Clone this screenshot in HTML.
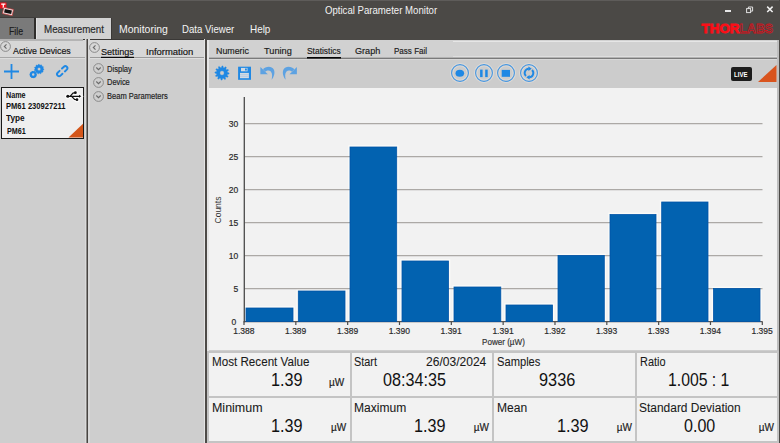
<!DOCTYPE html>
<html><head><meta charset="utf-8"><style>
html,body{margin:0;padding:0;}
body{width:780px;height:443px;overflow:hidden;position:relative;background:#cecece;font-family:"Liberation Sans", sans-serif;}
.t{-webkit-text-stroke:0.18px currentColor;}.tm{-webkit-text-stroke:0.08px currentColor;}.tl{}
</style></head><body>
<div style="position:absolute;left:0px;top:0px;width:780px;height:40px;background:#4b4946;"></div>
<div style="position:absolute;left:0px;top:0px;width:780px;height:1px;background:#5e5c5a;"></div>
<svg style="position:absolute;left:0;top:0" width="16" height="17" viewBox="0 0 16 17">
<rect x="0" y="2.5" width="6.5" height="6" fill="#e8121c"/>
<path d="M1.2 3.6h4.2v1.2h-1.5v3.2h-1.2v-3.2h-1.5z" fill="#fff"/>
<g transform="rotate(12 8 11.5)"><rect x="3" y="8.3" width="10" height="6.4" fill="#f4dede" stroke="#c03030" stroke-width="0.6"/><rect x="4.4" y="9.6" width="7.2" height="3.8" fill="#111"/></g>
</svg>
<div style="position:absolute;left:725px;top:10px;width:6px;height:2px;background:#e6e6e6;"></div>
<svg style="position:absolute;left:745px;top:5px" width="10" height="9" viewBox="0 0 10 9">
<rect x="1.6" y="3.6" width="4" height="4" fill="none" stroke="#e0e0e0" stroke-width="1"/>
<path d="M3.4 3.6v-1.6h4.2v4.1h-2" fill="none" stroke="#e0e0e0" stroke-width="1"/></svg>
<svg style="position:absolute;left:765px;top:5px" width="10" height="9" viewBox="0 0 10 9">
<path d="M2.2 1.6l5.4 5.4M7.6 1.6l-5.4 5.4" stroke="#f0f0f0" stroke-width="1.5"/></svg>
<svg style="position:absolute;left:700px;top:22px" width="76" height="13" viewBox="0 0 76 13">
<text x="1.5" y="11.3" font-family="Liberation Sans" font-weight="bold" font-size="13.5" fill="#fa0f18" stroke="#fa0f18" stroke-width="0.9" textLength="38" lengthAdjust="spacingAndGlyphs">THOR</text>
<text x="39.6" y="11.3" font-family="Liberation Sans" font-weight="bold" font-size="13.5" fill="none" stroke="#d0121c" stroke-width="0.8" textLength="33.4" lengthAdjust="spacingAndGlyphs">LABS</text>
</svg>
<div style="position:absolute;left:0px;top:17px;width:36px;height:1px;background:#3e3c3a;"></div>
<div style="position:absolute;left:0px;top:18px;width:35px;height:21px;background:#7a7a7a;"></div>
<div style="position:absolute;left:34px;top:18px;width:2px;height:21px;background:#2f2d2b;"></div>
<div style="position:absolute;left:36px;top:18px;width:75px;height:21px;background:#d2d2d2;"></div>
<div style="position:absolute;left:36px;top:18px;width:1px;height:21px;background:#e2e2e2;"></div>
<div style="position:absolute;left:111px;top:18px;width:1px;height:21px;background:#3a3836;"></div>
<div style="position:absolute;left:0px;top:40px;width:86px;height:403px;background:#cecece;"></div>
<div style="position:absolute;left:0px;top:40px;width:86px;height:17px;background:#d7d7d7;"></div>
<div style="position:absolute;left:0px;top:39px;width:83px;height:1.5px;background:#b4b4b4;"></div>
<div style="position:absolute;left:83px;top:39px;width:122px;height:1px;background:#3a3836;"></div>
<div style="position:absolute;left:0px;top:57px;width:86px;height:1px;background:#a6a6a6;"></div>
<div style="position:absolute;left:0px;top:58px;width:86px;height:1px;background:#dcdcdc;"></div>
<div style="position:absolute;left:85px;top:39px;width:1px;height:404px;background:#dadada;"></div>
<div style="position:absolute;left:86px;top:39px;width:1px;height:404px;background:#8c8a88;"></div>
<div style="position:absolute;left:87px;top:39px;width:1px;height:404px;background:#484542;"></div>
<div style="position:absolute;left:88px;top:39px;width:2px;height:404px;background:#d8d8d8;"></div>
<svg style="position:absolute;left:0px;top:41px" width="11" height="11" viewBox="0 0 11 11"><circle cx="5.5" cy="5.5" r="4.9" fill="none" stroke="#8a8a8a" stroke-width="1"/><path d="M6.5 3.3L4.3 5.5L6.5 7.7" fill="none" stroke="#6a6a6a" stroke-width="1.1"/></svg>
<svg style="position:absolute;left:3px;top:63px" width="17" height="17" viewBox="0 0 17 17">
<path d="M8.5 1v15M1 8.5h15" stroke="#1f88e4" stroke-width="1.8"/></svg>
<svg style="position:absolute;left:28px;top:62px" width="18" height="18" viewBox="0 0 18 18">
<path fill-rule="evenodd" fill="#1f88e4" stroke="#1f88e4" stroke-width="0.4" stroke-linejoin="round" d="M15.90 7.10L15.85 7.78L15.03 8.26L14.83 8.80L15.14 9.70L14.73 10.24L13.78 10.20L13.32 10.55L13.09 11.47L12.45 11.71L11.68 11.16L11.10 11.20L10.42 11.85L9.75 11.71L9.40 10.83L8.88 10.55L7.96 10.73L7.47 10.24L7.65 9.32L7.37 8.80L6.49 8.45L6.35 7.78L7.00 7.10L7.04 6.52L6.49 5.75L6.73 5.11L7.65 4.88L8.00 4.42L7.96 3.47L8.50 3.06L9.40 3.37L9.94 3.17L10.42 2.35L11.10 2.30L11.68 3.04L12.26 3.17L13.09 2.73L13.70 3.06L13.78 4.00L14.20 4.42L15.14 4.50L15.47 5.11L15.03 5.94L15.16 6.52ZM12.70 7.10A1.6 1.6 0 1 0 9.50 7.10A1.6 1.6 0 1 0 12.70 7.10Z"/>
<path fill-rule="evenodd" fill="#1f88e4" d="M8.90 12.60L8.85 13.18L8.53 13.68L8.32 14.19L8.19 14.77L7.82 15.22L7.26 15.43L6.79 15.72L6.34 16.12L5.78 16.25L5.20 16.10L4.65 16.06L4.06 16.12L3.52 15.90L3.14 15.43L2.73 15.07L2.21 14.77L1.90 14.28L1.87 13.68L1.74 13.15L1.50 12.60L1.55 12.02L1.87 11.52L2.08 11.01L2.21 10.43L2.58 9.98L3.14 9.77L3.61 9.48L4.06 9.08L4.62 8.95L5.20 9.10L5.75 9.14L6.34 9.08L6.88 9.30L7.26 9.77L7.67 10.13L8.19 10.43L8.50 10.92L8.53 11.52L8.66 12.05ZM6.45 12.60A1.25 1.25 0 1 0 3.95 12.60A1.25 1.25 0 1 0 6.45 12.60Z"/>
</svg>
<svg style="position:absolute;left:54px;top:63px" width="17" height="17" viewBox="0 0 17 17">
<g transform="translate(8.3 8.2) scale(0.8) translate(-8 -7.5)">
<path d="M7.6 4.2l2.4-2.3c1-1 2.6-1 3.6 0s1 2.6 0 3.6l-2.4 2.3" fill="none" stroke="#1f88e4" stroke-width="2.4" stroke-linecap="round"/>
<path d="M8.2 10.7l-2.4 2.3c-1 1-2.6 1-3.6 0s-1-2.6 0-3.6l2.4-2.3" fill="none" stroke="#1f88e4" stroke-width="2.4" stroke-linecap="round"/></g>
</svg>
<div style="position:absolute;left:1px;top:87px;width:83px;height:52px;background:#efefef;box-sizing:border-box;border:1.6px solid #1a1a1a;"></div>
<svg style="position:absolute;left:62px;top:88px" width="22" height="16" viewBox="0 0 22 16">
<g fill="#fafafa" stroke="#fafafa" stroke-width="2.6"><circle cx="5.8" cy="8.3" r="1.5"/><path d="M5.8 8.3H18M8 8.3L11 5.1L13.4 4.7M9.6 8.3L12.6 11.4L15 11.7" fill="none" stroke-width="3.2"/><path d="M17 6.8L19.3 8.3L17 9.8Z"/><circle cx="13.4" cy="4.7" r="1.35"/><circle cx="15" cy="11.7" r="1.35"/></g>
<g fill="#111" stroke="#111"><circle stroke="none" cx="5.8" cy="8.3" r="1.5"/><path d="M5.8 8.3H18M8 8.3L11 5.1L13.4 4.7M9.6 8.3L12.6 11.4L15 11.7" fill="none" stroke-width="1.2"/><path stroke="none" d="M17 6.8L19.3 8.3L17 9.8Z"/><circle stroke="none" cx="13.4" cy="4.7" r="1.35"/><circle stroke="none" cx="15" cy="11.7" r="1.35"/></g>
</svg>
<svg style="position:absolute;left:68px;top:123px" width="16" height="15" viewBox="0 0 16 15">
<path d="M0.5 14.5L15 0.8V14.5Z" fill="#d4561a"/></svg>
<div style="position:absolute;left:88px;top:40px;width:117px;height:403px;background:#cecece;"></div>
<div style="position:absolute;left:88px;top:40px;width:117px;height:17px;background:#d7d7d7;"></div>
<div style="position:absolute;left:88px;top:57px;width:117px;height:1px;background:#9a9a9a;"></div>
<div style="position:absolute;left:88px;top:58px;width:117px;height:1px;background:#dedede;"></div>
<div style="position:absolute;left:85px;top:39px;width:1px;height:404px;background:#dadada;"></div>
<div style="position:absolute;left:86px;top:39px;width:1px;height:404px;background:#8c8a88;"></div>
<div style="position:absolute;left:87px;top:39px;width:1px;height:404px;background:#484542;"></div>
<div style="position:absolute;left:88px;top:39px;width:2px;height:404px;background:#d8d8d8;"></div>
<svg style="position:absolute;left:89px;top:42px" width="11" height="11" viewBox="0 0 11 11"><circle cx="5.5" cy="5.5" r="4.9" fill="none" stroke="#8a8a8a" stroke-width="1"/><path d="M6.5 3.3L4.3 5.5L6.5 7.7" fill="none" stroke="#6a6a6a" stroke-width="1.1"/></svg>
<div style="position:absolute;left:101px;top:57px;width:33px;height:1px;background:#0c0c0c;"></div>
<div style="position:absolute;left:101px;top:56px;width:33px;height:1px;background:#a8a8a8;"></div>
<svg style="position:absolute;left:93px;top:63px" width="11" height="11" viewBox="0 0 11 11"><circle cx="5.5" cy="5.5" r="4.9" fill="none" stroke="#8a8a8a" stroke-width="1"/><path d="M3.3 4.5L5.5 6.7L7.7 4.5" fill="none" stroke="#6a6a6a" stroke-width="1.1"/></svg>
<svg style="position:absolute;left:93px;top:77px" width="11" height="11" viewBox="0 0 11 11"><circle cx="5.5" cy="5.5" r="4.9" fill="none" stroke="#8a8a8a" stroke-width="1"/><path d="M3.3 4.5L5.5 6.7L7.7 4.5" fill="none" stroke="#6a6a6a" stroke-width="1.1"/></svg>
<svg style="position:absolute;left:93px;top:90.5px" width="11" height="11" viewBox="0 0 11 11"><circle cx="5.5" cy="5.5" r="4.9" fill="none" stroke="#8a8a8a" stroke-width="1"/><path d="M3.3 4.5L5.5 6.7L7.7 4.5" fill="none" stroke="#6a6a6a" stroke-width="1.1"/></svg>
<div style="position:absolute;left:204px;top:39px;width:1px;height:404px;background:#e4e4e4;"></div>
<div style="position:absolute;left:205px;top:39px;width:2px;height:404px;background:#4e4b48;"></div>
<div style="position:absolute;left:207px;top:40px;width:573px;height:17px;background:#d1d1d1;"></div>
<div style="position:absolute;left:453px;top:41px;width:327px;height:1px;background:#e6e6e6;"></div>
<div style="position:absolute;left:453px;top:56px;width:327px;height:1px;background:#dedede;"></div>
<div style="position:absolute;left:207px;top:57px;width:573px;height:1px;background:#b2b2b2;"></div>
<div style="position:absolute;left:207px;top:58px;width:573px;height:1px;background:#7a7a7a;"></div>
<div style="position:absolute;left:207px;top:59px;width:573px;height:1px;background:#d8d8d8;"></div>
<div style="position:absolute;left:207px;top:60px;width:573px;height:28px;background:#cccccc;"></div>
<div style="position:absolute;left:207px;top:40px;width:2px;height:403px;background:#e6e6e6;"></div>
<div style="position:absolute;left:307px;top:57px;width:34px;height:1px;background:#050505;"></div>
<div style="position:absolute;left:307px;top:58px;width:34px;height:1px;background:#3c3c3c;"></div>
<svg style="position:absolute;left:213px;top:64px" width="18" height="18" viewBox="0 0 18 18">
<path fill-rule="evenodd" fill="#1f88e4" stroke="#1f88e4" stroke-width="0.4" stroke-linejoin="round" d="M16.10 9.00L16.04 9.93L14.22 10.40L13.99 11.07L15.15 12.55L14.63 13.32L12.82 12.82L12.29 13.28L12.55 15.15L11.72 15.56L10.40 14.22L9.70 14.35L9.00 16.10L8.07 16.04L7.60 14.22L6.93 13.99L5.45 15.15L4.68 14.63L5.18 12.82L4.72 12.29L2.85 12.55L2.44 11.72L3.78 10.40L3.65 9.70L1.90 9.00L1.96 8.07L3.78 7.60L4.01 6.93L2.85 5.45L3.37 4.68L5.18 5.18L5.71 4.72L5.45 2.85L6.28 2.44L7.60 3.78L8.30 3.65L9.00 1.90L9.93 1.96L10.40 3.78L11.07 4.01L12.55 2.85L13.32 3.37L12.82 5.18L13.28 5.71L15.15 5.45L15.56 6.28L14.22 7.60L14.35 8.30ZM11.20 9.00A2.2 2.2 0 1 0 6.80 9.00A2.2 2.2 0 1 0 11.20 9.00Z"/></svg>
<svg style="position:absolute;left:237px;top:66px" width="15" height="15" viewBox="0 0 15 15">
<rect x="1.1" y="0.7" width="12.9" height="13.1" fill="#1f88e4"/>
<rect x="3" y="6.9" width="8.9" height="5.3" fill="#d4dbe2"/>
<path d="M3 8.6h8.9M3 10.4h8.9" stroke="#a8c6e6" stroke-width="0.7"/>
<rect x="4" y="1.9" width="6.5" height="3.4" fill="#d4dbe2"/>
<rect x="8" y="2.5" width="1.8" height="2" fill="#1f88e4"/>
</svg>
<svg style="position:absolute;left:259px;top:65px" width="17" height="16" viewBox="0 0 17 16"><path d="M1.4 2L1.4 9.2L8.8 9.2Z" fill="#5da2e2"/><path d="M4 4.3C6 1.5 12.5 0 14.8 4.5C16.3 7.8 15 11.8 12.6 14.8C13.2 11.5 13.6 8.5 11.8 6.5C10.3 4.8 7.8 5.3 6.3 6.8Z" fill="#5da2e2"/></svg>
<svg style="position:absolute;left:282px;top:65px" width="17" height="16" viewBox="0 0 17 16"><g transform="translate(16.3 0) scale(-1 1)"><path d="M1.4 2L1.4 9.2L8.8 9.2Z" fill="#5da2e2"/><path d="M4 4.3C6 1.5 12.5 0 14.8 4.5C16.3 7.8 15 11.8 12.6 14.8C13.2 11.5 13.6 8.5 11.8 6.5C10.3 4.8 7.8 5.3 6.3 6.8Z" fill="#5da2e2"/></g></svg>
<svg style="position:absolute;left:450px;top:63px" width="20" height="20" viewBox="0 0 20 20">
<circle cx="10" cy="10" r="8.4" fill="none" stroke="#dedad6" stroke-width="3.2"/><circle cx="10" cy="10" r="8.4" fill="none" stroke="#4696e0" stroke-width="1.15"/><ellipse cx="9.8" cy="10.3" rx="4.3" ry="3.5" fill="#1f88e4"/></svg>
<svg style="position:absolute;left:473.5px;top:63px" width="20" height="20" viewBox="0 0 20 20">
<circle cx="10" cy="10" r="8.4" fill="none" stroke="#dedad6" stroke-width="3.2"/><circle cx="10" cy="10" r="8.4" fill="none" stroke="#4696e0" stroke-width="1.15"/><rect x="6.1" y="6.6" width="2.5" height="7.5" fill="#1f88e4"/><rect x="11.2" y="6.6" width="2.5" height="7.5" fill="#1f88e4"/></svg>
<svg style="position:absolute;left:496.3px;top:63px" width="20" height="20" viewBox="0 0 20 20">
<circle cx="10" cy="10" r="8.4" fill="none" stroke="#dedad6" stroke-width="3.2"/><circle cx="10" cy="10" r="8.4" fill="none" stroke="#4696e0" stroke-width="1.15"/><rect x="5.7" y="6.9" width="8.3" height="6.9" fill="#1f88e4"/></svg>
<svg style="position:absolute;left:519px;top:63px" width="20" height="20" viewBox="0 0 20 20">
<circle cx="10" cy="10" r="8.4" fill="none" stroke="#dedad6" stroke-width="3.2"/><circle cx="10" cy="10" r="8.4" fill="none" stroke="#4696e0" stroke-width="1.15"/><path d="M6.96 13.04A4.3 4.3 0 0 1 9.8 5.7M13.04 6.96A4.3 4.3 0 0 1 10.2 14.3" fill="none" stroke="#1f88e4" stroke-width="1.9"/><path d="M9.4 3.5L12.7 5.7L9.4 7.9ZM10.6 12.1L7.3 14.3L10.6 16.5Z" fill="#1f88e4"/></svg>
<div style="position:absolute;left:731px;top:67px;width:20.5px;height:14px;background:#1c1c1c;border-radius:2px;"></div>
<svg style="position:absolute;left:757px;top:64px" width="21" height="19" viewBox="0 0 21 19">
<path d="M1 18L19.5 1V18Z" fill="#d9541e"/></svg>
<div style="position:absolute;left:777px;top:40px;width:2px;height:403px;background:#bebebe;"></div>
<div style="position:absolute;left:209px;top:88px;width:568px;height:262px;background:#f2f2f2;"></div>
<div style="position:absolute;left:207px;top:88px;width:2px;height:355px;background:#e6e6e6;"></div>
<svg style="position:absolute;left:207px;top:88px" width="571" height="262" viewBox="207 88 571 262"><line x1="244.00" y1="321.6" x2="244.00" y2="325" stroke="#4a4a4a" stroke-width="1.2"/><line x1="295.83" y1="321.6" x2="295.83" y2="325" stroke="#4a4a4a" stroke-width="1.2"/><line x1="347.66" y1="321.6" x2="347.66" y2="325" stroke="#4a4a4a" stroke-width="1.2"/><line x1="399.49" y1="321.6" x2="399.49" y2="325" stroke="#4a4a4a" stroke-width="1.2"/><line x1="451.32" y1="321.6" x2="451.32" y2="325" stroke="#4a4a4a" stroke-width="1.2"/><line x1="503.15" y1="321.6" x2="503.15" y2="325" stroke="#4a4a4a" stroke-width="1.2"/><line x1="554.98" y1="321.6" x2="554.98" y2="325" stroke="#4a4a4a" stroke-width="1.2"/><line x1="606.81" y1="321.6" x2="606.81" y2="325" stroke="#4a4a4a" stroke-width="1.2"/><line x1="658.64" y1="321.6" x2="658.64" y2="325" stroke="#4a4a4a" stroke-width="1.2"/><line x1="710.47" y1="321.6" x2="710.47" y2="325" stroke="#4a4a4a" stroke-width="1.2"/><line x1="762.30" y1="321.6" x2="762.30" y2="325" stroke="#4a4a4a" stroke-width="1.2"/><rect x="244.20" y="306.20" width="50.60" height="15.40" fill="#fbfbf8"/><rect x="296.50" y="289.20" width="50.30" height="32.40" fill="#fbfbf8"/><rect x="348.20" y="145.20" width="50.30" height="176.40" fill="#fbfbf8"/><rect x="400.20" y="259.20" width="50.10" height="62.40" fill="#fbfbf8"/><rect x="452.20" y="285.20" width="50.40" height="36.40" fill="#fbfbf8"/><rect x="504.20" y="303.20" width="50.10" height="18.40" fill="#fbfbf8"/><rect x="556.20" y="253.70" width="49.90" height="67.90" fill="#fbfbf8"/><rect x="608.20" y="212.70" width="49.60" height="108.90" fill="#fbfbf8"/><rect x="659.90" y="200.20" width="49.90" height="121.40" fill="#fbfbf8"/><rect x="711.70" y="286.70" width="50.10" height="34.90" fill="#fbfbf8"/><line x1="244" y1="123.60" x2="762.5" y2="123.60" stroke="#aca9a6" stroke-width="1.3"/><line x1="244" y1="156.60" x2="762.5" y2="156.60" stroke="#aca9a6" stroke-width="1.3"/><line x1="244" y1="189.60" x2="762.5" y2="189.60" stroke="#aca9a6" stroke-width="1.3"/><line x1="244" y1="222.60" x2="762.5" y2="222.60" stroke="#aca9a6" stroke-width="1.3"/><line x1="244" y1="255.60" x2="762.5" y2="255.60" stroke="#aca9a6" stroke-width="1.3"/><line x1="244" y1="288.60" x2="762.5" y2="288.60" stroke="#aca9a6" stroke-width="1.3"/><line x1="243.7" y1="321.6" x2="762.5" y2="321.6" stroke="#5a5550" stroke-width="1.1"/><line x1="244.3" y1="97" x2="244.3" y2="322.2" stroke="#4a4a4a" stroke-width="1.3"/><rect x="246.00" y="308.00" width="47.00" height="13.60" fill="#0262b0" stroke="#0054a8" stroke-width="0.8"/><rect x="298.30" y="291.00" width="46.70" height="30.60" fill="#0262b0" stroke="#0054a8" stroke-width="0.8"/><rect x="350.00" y="147.00" width="46.70" height="174.60" fill="#0262b0" stroke="#0054a8" stroke-width="0.8"/><rect x="402.00" y="261.00" width="46.50" height="60.60" fill="#0262b0" stroke="#0054a8" stroke-width="0.8"/><rect x="454.00" y="287.00" width="46.80" height="34.60" fill="#0262b0" stroke="#0054a8" stroke-width="0.8"/><rect x="506.00" y="305.00" width="46.50" height="16.60" fill="#0262b0" stroke="#0054a8" stroke-width="0.8"/><rect x="558.00" y="255.50" width="46.30" height="66.10" fill="#0262b0" stroke="#0054a8" stroke-width="0.8"/><rect x="610.00" y="214.50" width="46.00" height="107.10" fill="#0262b0" stroke="#0054a8" stroke-width="0.8"/><rect x="661.70" y="202.00" width="46.30" height="119.60" fill="#0262b0" stroke="#0054a8" stroke-width="0.8"/><rect x="713.50" y="288.50" width="46.50" height="33.10" fill="#0262b0" stroke="#0054a8" stroke-width="0.8"/></svg>
<div style="position:absolute;left:190px;top:204px;width:56px;height:12px;font-size:8.5px;line-height:12px;color:#333;text-align:center;transform:rotate(-90deg);">Counts</div>
<div style="position:absolute;left:207px;top:350.5px;width:573px;height:93px;background:#c4c4c4;"></div>
<div style="position:absolute;left:209px;top:352.5px;width:140.5px;height:43.5px;background:#f2f2f2;"></div>
<div style="position:absolute;left:209px;top:398px;width:140.5px;height:43px;background:#f2f2f2;"></div>
<div style="position:absolute;left:351.5px;top:352.5px;width:140.5px;height:43.5px;background:#f2f2f2;"></div>
<div style="position:absolute;left:351.5px;top:398px;width:140.5px;height:43px;background:#f2f2f2;"></div>
<div style="position:absolute;left:494px;top:352.5px;width:141px;height:43.5px;background:#f2f2f2;"></div>
<div style="position:absolute;left:494px;top:398px;width:141px;height:43px;background:#f2f2f2;"></div>
<div style="position:absolute;left:637px;top:352.5px;width:140px;height:43.5px;background:#f2f2f2;"></div>
<div style="position:absolute;left:637px;top:398px;width:140px;height:43px;background:#f2f2f2;"></div>
<div style="position:absolute;left:777px;top:350.5px;width:2px;height:93px;background:#c4c4c4;"></div>
<div style="position:absolute;left:779px;top:0px;width:1px;height:443px;background:#4b4946;"></div>
<div class="tl" style="position:absolute;left:324.80px;top:4.65px;font-size:11px;line-height:1;font-weight:normal;color:#f2f2f2;white-space:pre;transform:scaleX(0.8732);transform-origin:0 0;">Optical Parameter Monitor</div>
<div class="t" style="position:absolute;left:9.00px;top:25.58px;font-size:10.5px;line-height:1;font-weight:normal;color:#1c1c1c;white-space:pre;transform:scaleX(0.8373);transform-origin:0 0;">File</div>
<div class="t" style="position:absolute;left:44.00px;top:24.08px;font-size:10.5px;line-height:1;font-weight:normal;color:#2a2a2a;white-space:pre;transform:scaleX(0.9335);transform-origin:0 0;">Measurement</div>
<div class="tl" style="position:absolute;left:118.50px;top:24.08px;font-size:10.5px;line-height:1;font-weight:normal;color:#f4f4f4;white-space:pre;transform:scaleX(0.9963);transform-origin:0 0;">Monitoring</div>
<div class="tl" style="position:absolute;left:182.30px;top:24.08px;font-size:10.5px;line-height:1;font-weight:normal;color:#f4f4f4;white-space:pre;transform:scaleX(0.9164);transform-origin:0 0;">Data Viewer</div>
<div class="tl" style="position:absolute;left:249.50px;top:24.08px;font-size:10.5px;line-height:1;font-weight:normal;color:#f4f4f4;white-space:pre;transform:scaleX(0.9423);transform-origin:0 0;">Help</div>
<div class="t" style="position:absolute;left:13.00px;top:45.92px;font-size:9.5px;line-height:1;font-weight:normal;color:#141414;white-space:pre;transform:scaleX(0.9273);transform-origin:0 0;">Active Devices</div>
<div class="tb" style="position:absolute;left:5.70px;top:90.79px;font-size:8.6px;line-height:1;font-weight:bold;color:#111;white-space:pre;transform:scaleX(0.8380);transform-origin:0 0;">Name</div>
<div class="tb" style="position:absolute;left:6.10px;top:102.29px;font-size:8.6px;line-height:1;font-weight:bold;color:#111;white-space:pre;transform:scaleX(0.8817);transform-origin:0 0;">PM61 230927211</div>
<div class="tb" style="position:absolute;left:5.70px;top:113.79px;font-size:8.6px;line-height:1;font-weight:bold;color:#111;white-space:pre;transform:scaleX(0.9572);transform-origin:0 0;">Type</div>
<div class="tb" style="position:absolute;left:6.80px;top:127.09px;font-size:8.6px;line-height:1;font-weight:bold;color:#111;white-space:pre;transform:scaleX(0.8337);transform-origin:0 0;">PM61</div>
<div class="t" style="position:absolute;left:101.40px;top:46.53px;font-size:9.5px;line-height:1;font-weight:normal;color:#141414;white-space:pre;transform:scaleX(0.9573);transform-origin:0 0;">Settings</div>
<div class="t" style="position:absolute;left:146.00px;top:46.53px;font-size:9.5px;line-height:1;font-weight:normal;color:#141414;white-space:pre;transform:scaleX(0.9949);transform-origin:0 0;">Information</div>
<div class="t" style="position:absolute;left:106.50px;top:64.78px;font-size:8.5px;line-height:1;font-weight:normal;color:#1e1e1e;white-space:pre;transform:scaleX(0.8910);transform-origin:0 0;">Display</div>
<div class="t" style="position:absolute;left:106.50px;top:78.28px;font-size:8.5px;line-height:1;font-weight:normal;color:#1e1e1e;white-space:pre;transform:scaleX(0.8761);transform-origin:0 0;">Device</div>
<div class="t" style="position:absolute;left:106.50px;top:91.78px;font-size:8.5px;line-height:1;font-weight:normal;color:#1e1e1e;white-space:pre;transform:scaleX(0.8865);transform-origin:0 0;">Beam Parameters</div>
<div class="t" style="position:absolute;left:215.80px;top:46.22px;font-size:9.5px;line-height:1;font-weight:normal;color:#1c1c1c;white-space:pre;transform:scaleX(0.9322);transform-origin:0 0;">Numeric</div>
<div class="t" style="position:absolute;left:263.50px;top:46.22px;font-size:9.5px;line-height:1;font-weight:normal;color:#1c1c1c;white-space:pre;transform:scaleX(0.9679);transform-origin:0 0;">Tuning</div>
<div class="t" style="position:absolute;left:306.50px;top:46.22px;font-size:9.5px;line-height:1;font-weight:normal;color:#1c1c1c;white-space:pre;transform:scaleX(0.8861);transform-origin:0 0;">Statistics</div>
<div class="t" style="position:absolute;left:355.00px;top:46.22px;font-size:9.5px;line-height:1;font-weight:normal;color:#1c1c1c;white-space:pre;transform:scaleX(0.9571);transform-origin:0 0;">Graph</div>
<div class="t" style="position:absolute;left:394.00px;top:46.22px;font-size:9.5px;line-height:1;font-weight:normal;color:#1c1c1c;white-space:pre;transform:scaleX(0.8471);transform-origin:0 0;">Pass Fail</div>
<div class="tb" style="position:absolute;left:734.00px;top:70.50px;font-size:8px;line-height:1;font-weight:bold;color:#fff;white-space:pre;transform:scaleX(0.7590);transform-origin:0 0;">LIVE</div>
<div class="t" style="position:absolute;left:228.77px;top:120.38px;font-size:8.5px;line-height:1;font-weight:normal;color:#2a2a2a;white-space:pre;">30</div>
<div class="t" style="position:absolute;left:228.77px;top:153.38px;font-size:8.5px;line-height:1;font-weight:normal;color:#2a2a2a;white-space:pre;">25</div>
<div class="t" style="position:absolute;left:228.77px;top:186.38px;font-size:8.5px;line-height:1;font-weight:normal;color:#2a2a2a;white-space:pre;">20</div>
<div class="t" style="position:absolute;left:228.77px;top:219.38px;font-size:8.5px;line-height:1;font-weight:normal;color:#2a2a2a;white-space:pre;">15</div>
<div class="t" style="position:absolute;left:228.77px;top:252.38px;font-size:8.5px;line-height:1;font-weight:normal;color:#2a2a2a;white-space:pre;">10</div>
<div class="t" style="position:absolute;left:233.50px;top:285.38px;font-size:8.5px;line-height:1;font-weight:normal;color:#2a2a2a;white-space:pre;">5</div>
<div class="t" style="position:absolute;left:231.50px;top:318.07px;font-size:8.5px;line-height:1;font-weight:normal;color:#2a2a2a;white-space:pre;">0</div>
<div class="t" style="position:absolute;left:233.23px;top:326.77px;font-size:8.5px;line-height:1;font-weight:normal;color:#2a2a2a;white-space:pre;">1.388</div>
<div class="t" style="position:absolute;left:285.06px;top:326.77px;font-size:8.5px;line-height:1;font-weight:normal;color:#2a2a2a;white-space:pre;">1.389</div>
<div class="t" style="position:absolute;left:336.89px;top:326.77px;font-size:8.5px;line-height:1;font-weight:normal;color:#2a2a2a;white-space:pre;">1.389</div>
<div class="t" style="position:absolute;left:388.72px;top:326.77px;font-size:8.5px;line-height:1;font-weight:normal;color:#2a2a2a;white-space:pre;">1.390</div>
<div class="t" style="position:absolute;left:440.55px;top:326.77px;font-size:8.5px;line-height:1;font-weight:normal;color:#2a2a2a;white-space:pre;">1.391</div>
<div class="t" style="position:absolute;left:492.38px;top:326.77px;font-size:8.5px;line-height:1;font-weight:normal;color:#2a2a2a;white-space:pre;">1.391</div>
<div class="t" style="position:absolute;left:544.21px;top:326.77px;font-size:8.5px;line-height:1;font-weight:normal;color:#2a2a2a;white-space:pre;">1.392</div>
<div class="t" style="position:absolute;left:596.04px;top:326.77px;font-size:8.5px;line-height:1;font-weight:normal;color:#2a2a2a;white-space:pre;">1.393</div>
<div class="t" style="position:absolute;left:647.87px;top:326.77px;font-size:8.5px;line-height:1;font-weight:normal;color:#2a2a2a;white-space:pre;">1.393</div>
<div class="t" style="position:absolute;left:699.70px;top:326.77px;font-size:8.5px;line-height:1;font-weight:normal;color:#2a2a2a;white-space:pre;">1.394</div>
<div class="t" style="position:absolute;left:751.53px;top:326.77px;font-size:8.5px;line-height:1;font-weight:normal;color:#2a2a2a;white-space:pre;">1.395</div>
<div class="t" style="position:absolute;left:482.00px;top:337.77px;font-size:8.5px;line-height:1;font-weight:normal;color:#333;white-space:pre;transform:scaleX(0.9512);transform-origin:0 0;">Power (µW)</div>
<div class="tm" style="position:absolute;left:211.70px;top:355.60px;font-size:12px;line-height:1;font-weight:normal;color:#1a1a1a;white-space:pre;transform:scaleX(0.9700);transform-origin:0 0;">Most Recent Value</div>
<div class="tl" style="position:absolute;left:270.82px;top:370.97px;font-size:18.5px;line-height:1;font-weight:normal;color:#111;white-space:pre;transform:scaleX(0.8756);transform-origin:0 0;">1.39</div>
<div class="t" style="position:absolute;left:329.00px;top:377.90px;font-size:10px;line-height:1;font-weight:normal;color:#222;white-space:pre;">µW</div>
<div class="tm" style="position:absolute;left:354.20px;top:355.60px;font-size:12px;line-height:1;font-weight:normal;color:#1a1a1a;white-space:pre;transform:scaleX(0.9074);transform-origin:0 0;">Start</div>
<div class="tl" style="position:absolute;left:382.50px;top:370.97px;font-size:18.5px;line-height:1;font-weight:normal;color:#111;white-space:pre;transform:scaleX(0.8742);transform-origin:0 0;">08:34:35</div>
<div class="tm" style="position:absolute;left:496.80px;top:355.60px;font-size:12px;line-height:1;font-weight:normal;color:#1a1a1a;white-space:pre;transform:scaleX(0.9296);transform-origin:0 0;">Samples</div>
<div class="tl" style="position:absolute;left:539.20px;top:370.97px;font-size:18.5px;line-height:1;font-weight:normal;color:#111;white-space:pre;transform:scaleX(0.8809);transform-origin:0 0;">9336</div>
<div class="tm" style="position:absolute;left:639.70px;top:355.60px;font-size:12px;line-height:1;font-weight:normal;color:#1a1a1a;white-space:pre;transform:scaleX(0.9104);transform-origin:0 0;">Ratio</div>
<div class="tl" style="position:absolute;left:668.05px;top:370.97px;font-size:18.5px;line-height:1;font-weight:normal;color:#111;white-space:pre;transform:scaleX(0.8527);transform-origin:0 0;">1.005 : 1</div>
<div class="tm" style="position:absolute;left:211.50px;top:402.00px;font-size:12px;line-height:1;font-weight:normal;color:#1a1a1a;white-space:pre;transform:scaleX(1.0376);transform-origin:0 0;">Minimum</div>
<div class="tl" style="position:absolute;left:270.82px;top:417.38px;font-size:18.5px;line-height:1;font-weight:normal;color:#111;white-space:pre;transform:scaleX(0.8756);transform-origin:0 0;">1.39</div>
<div class="t" style="position:absolute;left:331.00px;top:423.30px;font-size:10px;line-height:1;font-weight:normal;color:#222;white-space:pre;">µW</div>
<div class="tm" style="position:absolute;left:354.20px;top:402.00px;font-size:12px;line-height:1;font-weight:normal;color:#1a1a1a;white-space:pre;transform:scaleX(1.0057);transform-origin:0 0;">Maximum</div>
<div class="tl" style="position:absolute;left:413.92px;top:417.38px;font-size:18.5px;line-height:1;font-weight:normal;color:#111;white-space:pre;transform:scaleX(0.8756);transform-origin:0 0;">1.39</div>
<div class="t" style="position:absolute;left:473.70px;top:423.30px;font-size:10px;line-height:1;font-weight:normal;color:#222;white-space:pre;">µW</div>
<div class="tm" style="position:absolute;left:496.80px;top:402.00px;font-size:12px;line-height:1;font-weight:normal;color:#1a1a1a;white-space:pre;transform:scaleX(1.0053);transform-origin:0 0;">Mean</div>
<div class="tl" style="position:absolute;left:556.82px;top:417.38px;font-size:18.5px;line-height:1;font-weight:normal;color:#111;white-space:pre;transform:scaleX(0.8785);transform-origin:0 0;">1.39</div>
<div class="t" style="position:absolute;left:616.70px;top:423.30px;font-size:10px;line-height:1;font-weight:normal;color:#222;white-space:pre;">µW</div>
<div class="tm" style="position:absolute;left:639.30px;top:402.00px;font-size:12px;line-height:1;font-weight:normal;color:#1a1a1a;white-space:pre;transform:scaleX(0.9961);transform-origin:0 0;">Standard Deviation</div>
<div class="tl" style="position:absolute;left:684.40px;top:417.38px;font-size:18.5px;line-height:1;font-weight:normal;color:#111;white-space:pre;transform:scaleX(0.8679);transform-origin:0 0;">0.00</div>
<div class="t" style="position:absolute;left:758.70px;top:423.30px;font-size:10px;line-height:1;font-weight:normal;color:#222;white-space:pre;">µW</div>
<div class="tm" style="position:absolute;left:426.20px;top:355.60px;font-size:12px;line-height:1;font-weight:normal;color:#1a1a1a;white-space:pre;transform:scaleX(1.0036);transform-origin:0 0;">26/03/2024</div>
</body></html>
